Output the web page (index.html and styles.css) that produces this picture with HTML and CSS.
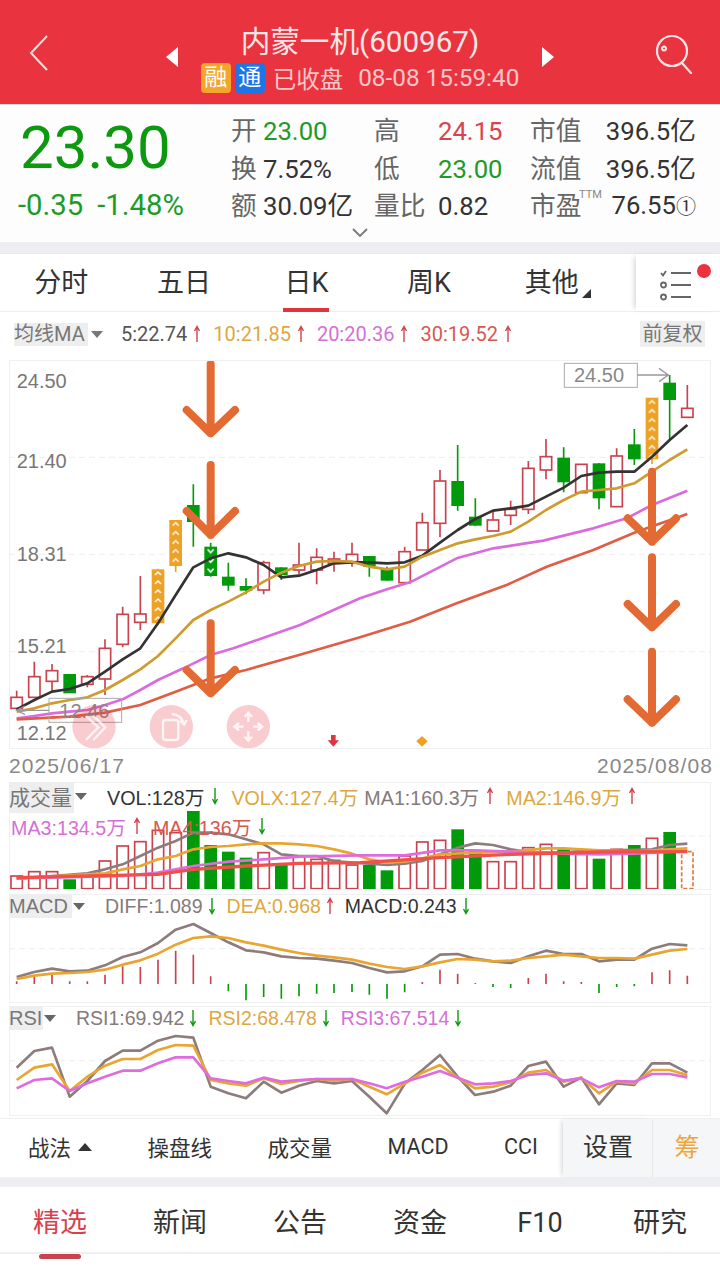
FILE: index.html
```html
<!DOCTYPE html>
<html lang="zh-CN">
<head>
<meta charset="UTF-8">
<title>内蒙一机(600967)</title>
<link rel="stylesheet" href="styles.css">
</head>
<body>
<svg class="defs" width="0" height="0">
  <defs>
    <symbol id="ar-up" viewBox="0 0 8 18"><path d="M4 17V2M1.5 6L4 1.5L6.500 6"/></symbol>
    <symbol id="ar-dn" viewBox="0 0 8 18"><path d="M4 1V16M1.500 12L4 16.500L6.500 12"/></symbol>
    <pattern id="chev-up" patternUnits="userSpaceOnUse" x="455" y="660" width="38" height="27">
      <path d="M10 15L19 6L28 15" fill="none" stroke="#fff" stroke-width="4"/>
    </pattern>
    <pattern id="chev-up2" href="#chev-up" x="508" y="512"></pattern>
    <pattern id="chev-up3" href="#chev-up" x="1937" y="146"></pattern>
    <pattern id="chev-dn" patternUnits="userSpaceOnUse" x="613" y="590" width="38" height="29">
      <path d="M10 8L19 18L28 8" fill="none" stroke="#fff" stroke-width="5"/>
    </pattern>
  </defs>
</svg>

<div class="head">
  <svg class="back" width="20" height="36" viewBox="0 0 20 36"><path d="M18 1L2 18L18 35"/></svg>
  <span class="tri tri-l"></span>
  <div class="head-mid">
    <div class="title">内蒙一机(600967)</div>
    <div class="sub">
      <span class="badge badge-o">融</span><span class="badge badge-b">通</span>
      <span class="state">已收盘</span>
      <span class="time">08-08 15:59:40</span>
    </div>
  </div>
  <span class="tri tri-r"></span>
  <svg class="search" width="38" height="40" viewBox="0 0 38 40">
    <circle cx="17" cy="17" r="15"/><path d="M9 12.500a2 2 0 1 0 .1 0M27 29L36 39"/>
  </svg>
</div>

<div class="info">
  <div class="price">
    <div class="now">23.30</div>
    <div class="chg"><span>-0.35</span><span>-1.48%</span></div>
  </div>
  <div class="stats">
    <div class="st st1"><b>开</b><i class="green">23.00</i></div>
    <div class="st st2"><b>高</b><i class="red">24.15</i></div>
    <div class="st st3"><b>市值</b><i>396.5亿</i></div>
    <div class="st st1"><b>换</b><i>7.52%</i></div>
    <div class="st st2"><b>低</b><i class="green">23.00</i></div>
    <div class="st st3"><b>流值</b><i>396.5亿</i></div>
    <div class="st st1"><b>额</b><i>30.09亿</i></div>
    <div class="st st2"><b>量比</b><i>0.82</i></div>
    <div class="st st3"><b>市盈<sup>TTM</sup></b><i>76.55<small>①</small></i></div>
  </div>
  <svg class="more" width="16" height="9" viewBox="0 0 16 9"><path d="M1 1L8 8L15 1"/></svg>
</div>

<div class="tabs">
  <div class="tab-list">
    <span>分时</span>
    <span>五日</span>
    <span class="on">日K</span>
    <span>周K</span>
    <span class="other">其他</span>
  </div>
  <div class="tab-menu">
    <svg width="36" height="36" viewBox="0 0 36 36">
      <path d="M1 6l2 2.500l3-4.500M11 6H31M11 18H31M11 30H31"/>
      <circle cx="3.500" cy="18" r="2.500"/><circle cx="3.500" cy="30" r="2.500"/>
    </svg>
    <span class="dot"></span>
  </div>
</div>

<div class="ma-row">
  <span class="pick ma-pick">均线MA</span><span class="drop"></span>
  <span class="ma-val c-dark">5:22.74<svg class="ar up"><use href="#ar-up"/></svg></span>
  <span class="ma-val c-gold">10:21.85<svg class="ar up"><use href="#ar-up"/></svg></span>
  <span class="ma-val c-pink">20:20.36<svg class="ar up"><use href="#ar-up"/></svg></span>
  <span class="ma-val c-red">30:19.52<svg class="ar up"><use href="#ar-up"/></svg></span>
  <span class="pick fq">前复权</span>
</div>

<!-- 主图，坐标按 3 倍写 -->
<div class="panel">
  <svg class="chart" width="702" height="389" viewBox="27 30 2106 1167">
    <path class="grid" d="M27 322H2133M27 613H2133M27 905H2133"/>
    <g class="axis">
      <text x="50" y="113">24.50</text>
      <text x="50" y="354">21.40</text>
      <text x="50" y="633">18.31</text>
      <text x="50" y="910">15.21</text>
      <text x="50" y="1170">12.12</text>
    </g>

    <path class="wick-r" d="M50 1022V1080M103 935V1042M156 942V1025M262 975V1012M315 868V1035M368 770V892M421 678V840M791 632V733M897 578V672M950 595V703M1002 605V665M1056 578V650M1214 590V698M1267 488V600M1320 360V562M1479 485V543M1532 452V525M1585 333V492M1638 267V388M1744 343V428M1850 295V470M2062 105V202"/>
    <g class="body-r">
      <rect x="33" y="1042" width="34" height="33"/>
      <rect x="86" y="980" width="34" height="62"/>
      <rect x="139" y="962" width="34" height="32"/>
      <rect x="245" y="980" width="34" height="23"/>
      <rect x="298" y="895" width="34" height="92"/>
      <rect x="351" y="793" width="34" height="90"/>
      <rect x="404" y="792" width="34" height="25"/>
      <rect x="774" y="638" width="34" height="82"/>
      <rect x="880" y="645" width="34" height="15"/>
      <rect x="933" y="622" width="34" height="38"/>
      <rect x="985" y="627" width="34" height="13"/>
      <rect x="1039" y="613" width="34" height="22"/>
      <rect x="1197" y="605" width="34" height="93"/>
      <rect x="1250" y="518" width="34" height="82"/>
      <rect x="1303" y="393" width="34" height="127"/>
      <rect x="1462" y="510" width="34" height="33"/>
      <rect x="1515" y="478" width="34" height="18"/>
      <rect x="1568" y="355" width="34" height="123"/>
      <rect x="1621" y="320" width="34" height="40"/>
      <rect x="1727" y="343" width="34" height="85"/>
      <rect x="1833" y="318" width="34" height="152"/>
      <rect x="2045" y="175" width="34" height="27"/>
    </g>
    <path class="wick-g" d="M580 403V590M632 578V680M685 638V722M738 685V733M844 652V690M1108 618V680M1161 650V692M1373 285V482M1426 445V527M1691 292V427M1797 340V478M1903 237V345M2009 75V270"/>
    <g class="body-g">
      <rect x="190" y="972" width="38" height="58"/>
      <rect x="561" y="465" width="38" height="51"/>
      <rect x="613" y="590" width="38" height="88"/>
      <rect x="666" y="680" width="38" height="27"/>
      <rect x="719" y="708" width="38" height="14"/>
      <rect x="825" y="652" width="38" height="23"/>
      <rect x="1089" y="618" width="38" height="32"/>
      <rect x="1142" y="655" width="38" height="37"/>
      <rect x="1354" y="393" width="38" height="75"/>
      <rect x="1407" y="500" width="38" height="27"/>
      <rect x="1672" y="323" width="38" height="74"/>
      <rect x="1778" y="340" width="38" height="105"/>
      <rect x="1884" y="283" width="38" height="45"/>
      <rect x="1990" y="98" width="38" height="52"/>
    </g>
    <rect fill="url(#chev-dn)" x="613" y="590" width="38" height="88"/>
    <path class="wick-o" d="M474 656V825M527 640V666M1956 320V342"/>
    <g class="body-o">
      <rect x="455" y="658" width="38" height="162"/>
      <rect x="508" y="510" width="38" height="138"/>
      <rect x="1937" y="143" width="38" height="185"/>
    </g>
    <rect fill="url(#chev-up)" x="455" y="658" width="38" height="162"/>
    <rect fill="url(#chev-up2)" x="508" y="510" width="38" height="138"/>
    <rect fill="url(#chev-up3)" x="1937" y="143" width="38" height="185"/>

    <g class="lines">
      <polyline class="l-black" points="50,1078 103,1050 156,1025 209,1017 262,1000 315,965 368,928 421,895 474,820 527,735 580,652 632,625 685,610 738,622 791,645 844,682 897,677 950,660 1002,640 1056,637 1108,637 1161,640 1214,637 1267,617 1320,578 1373,540 1426,507 1479,482 1532,475 1585,467 1638,440 1691,413 1744,378 1797,368 1850,365 1903,365 1956,320 2009,270 2062,225"/>
      <polyline class="l-gold" points="50,1085 103,1075 156,1060 209,1050 262,1042 315,1020 368,990 421,958 474,918 527,865 580,810 632,780 685,755 738,727 791,695 844,668 897,648 950,635 1002,633 1056,635 1108,650 1161,658 1214,650 1267,620 1320,600 1373,580 1426,568 1479,558 1532,545 1585,515 1638,480 1691,450 1744,425 1797,420 1850,415 1903,400 1956,365 2009,330 2062,298"/>
      <polyline class="l-pink" points="50,1105 103,1098 156,1090 209,1085 262,1080 315,1065 368,1048 421,1020 474,990 550,955 632,915 700,895 900,825 1080,745 1161,718 1230,697 1370,625 1480,595 1630,572 1780,535 1880,505 1956,465 2062,422"/>
      <polyline class="l-red" points="50,1108 209,1100 315,1088 421,1065 527,1025 632,985 738,960 897,915 1080,862 1230,815 1370,760 1520,705 1640,650 1780,600 1910,545 2062,492"/>
    </g>

    <g class="tag">
      <rect x="147" y="1045" width="218" height="72"/>
      <path d="M147 1081H50M75 1068L50 1081L75 1094"/>
      <text x="178" y="1103">12.46</text>
      <rect x="1693" y="40" width="219" height="72"/>
      <path d="M1912 75H2005M1977 55L2005 75L1977 95"/>
      <text x="1722" y="97">24.50</text>
    </g>

    <g class="orange-arrows">
      <path d="M632 42V250M560 180L632 250L705 180"/>
      <path d="M632 345V555M560 483L632 555L705 483"/>
      <path d="M632 820V1030M560 960L632 1030L705 960"/>
      <path d="M1956 365V575M1883 505L1956 575L2028 505"/>
      <path d="M1956 622V832M1883 762L1956 832L2028 762"/>
      <path d="M1956 905V1118M1883 1048L1956 1118L2028 1048"/>
    </g>

    <g class="float-btn">
      <circle cx="282" cy="1130" r="65"/>
      <circle cx="514" cy="1130" r="65"/>
      <circle cx="745" cy="1130" r="65"/>
      <path d="M258 1098L295 1132L258 1170M280 1098L316 1132L280 1170"/>
      <rect x="489" y="1110" width="46" height="60" rx="8"/>
      <path d="M515 1092Q544 1094 552 1122M540 1112L552 1124L560 1110"/>
      <path d="M745 1090V1116M734 1100L745 1088L756 1100M745 1144V1170M734 1160L745 1172L756 1160M705 1130H731M717 1119L703 1130L717 1141M759 1130H785M773 1119L787 1130L773 1141"/>
    </g>

    <path class="mark-r" d="M993 1155H1007V1171H1017L1000 1190L983 1171H993Z"/>
    <path class="mark-o" d="M1266 1158L1283 1174L1266 1190L1249 1174Z"/>
  </svg>
</div>

<div class="dates"><span>2025/06/17</span><span>2025/08/08</span></div>

<div class="panel vol">
  <div class="legend">
    <div class="leg-line">
      <span class="pick vol-pick">成交量</span><span class="drop"></span>
      <span class="leg lg-first c-black">VOL:128万<svg class="ar dn"><use href="#ar-dn"/></svg></span>
      <span class="leg lg-tight c-gold">VOLX:127.4万</span>
      <span class="leg c-gray">MA1:160.3万<svg class="ar up"><use href="#ar-up"/></svg></span>
      <span class="leg c-gold">MA2:146.9万<svg class="ar up"><use href="#ar-up"/></svg></span>
    </div>
    <div class="leg-line line2">
      <span class="leg c-pink">MA3:134.5万<svg class="ar up"><use href="#ar-up"/></svg></span>
      <span class="leg c-red">MA4:136万<svg class="ar dn"><use href="#ar-dn"/></svg></span>
    </div>
  </div>
  <svg class="chart" width="702" height="108" viewBox="27 23 2106 324">
    <path class="grid" d="M27 185H2133"/>
    <g class="body-r">
      <rect x="33" y="305" width="34" height="38"/>
      <rect x="86" y="292" width="34" height="51"/>
      <rect x="139" y="292" width="34" height="51"/>
      <rect x="245" y="305" width="34" height="38"/>
      <rect x="298" y="260" width="34" height="83"/>
      <rect x="351" y="215" width="34" height="128"/>
      <rect x="404" y="202" width="34" height="141"/>
      <rect x="457" y="168" width="34" height="175"/>
      <rect x="510" y="175" width="34" height="168"/>
      <rect x="774" y="235" width="34" height="108"/>
      <rect x="880" y="245" width="34" height="98"/>
      <rect x="933" y="255" width="34" height="88"/>
      <rect x="985" y="258" width="34" height="85"/>
      <rect x="1039" y="272" width="34" height="71"/>
      <rect x="1197" y="245" width="34" height="98"/>
      <rect x="1250" y="203" width="34" height="140"/>
      <rect x="1303" y="198" width="34" height="145"/>
      <rect x="1462" y="262" width="34" height="81"/>
      <rect x="1515" y="262" width="34" height="81"/>
      <rect x="1568" y="220" width="34" height="123"/>
      <rect x="1621" y="210" width="34" height="133"/>
      <rect x="1727" y="240" width="34" height="103"/>
      <rect x="1833" y="225" width="34" height="118"/>
      <rect x="1939" y="192" width="34" height="151"/>
    </g>
    <g class="body-g">
      <rect x="190" y="315" width="38" height="30"/>
      <rect x="561" y="110" width="38" height="235"/>
      <rect x="613" y="212" width="38" height="133"/>
      <rect x="666" y="232" width="38" height="113"/>
      <rect x="719" y="250" width="38" height="95"/>
      <rect x="825" y="272" width="38" height="73"/>
      <rect x="1089" y="272" width="38" height="73"/>
      <rect x="1142" y="288" width="38" height="57"/>
      <rect x="1354" y="165" width="38" height="180"/>
      <rect x="1407" y="230" width="38" height="115"/>
      <rect x="1672" y="225" width="38" height="120"/>
      <rect x="1778" y="253" width="38" height="92"/>
      <rect x="1884" y="212" width="38" height="133"/>
      <rect x="1990" y="173" width="38" height="172"/>
    </g>
    <rect class="body-d" x="2045" y="232" width="34" height="111"/>
    <g class="lines">
      <polyline class="l-gray" points="50,312 156,305 262,297 315,285 368,270 421,245 474,220 527,200 580,175 632,175 685,180 738,195 791,210 844,240 897,245 950,245 1002,260 1056,265 1108,268 1161,272 1214,268 1267,260 1320,240 1373,220 1426,207 1479,212 1532,225 1585,233 1638,235 1691,235 1744,230 1956,225 2009,212 2062,208"/>
      <polyline class="l-gold2" points="50,312 262,300 315,297 368,285 421,275 474,255 527,245 580,225 632,218 685,215 738,210 791,207 844,207 897,210 950,215 1002,225 1056,238 1108,255 1161,265 1214,262 1267,252 1320,240 1426,235 1532,232 1638,222 1691,222 1797,228 1903,232 2009,225 2062,222"/>
      <polyline class="l-pink2" points="50,312 368,305 474,295 580,275 685,262 791,255 897,247 1080,243 1214,243 1320,228 1426,228 1532,232 1691,238 1797,240 1903,238 2062,230"/>
      <polyline class="l-red2" points="50,310 474,300 580,285 738,275 897,267 1080,265 1320,250 1532,240 1797,233 2062,232"/>
    </g>
  </svg>
</div>

<div class="panel sub-panel">
  <div class="legend">
    <div class="leg-line">
      <span class="pick macd-pick">MACD</span><span class="drop"></span>
      <span class="leg lg-first c-gray">DIFF:1.089<svg class="ar dn"><use href="#ar-dn"/></svg></span>
      <span class="leg c-gold">DEA:0.968<svg class="ar up"><use href="#ar-up"/></svg></span>
      <span class="leg c-black">MACD:0.243<svg class="ar dn"><use href="#ar-dn"/></svg></span>
    </div>
  </div>
  <svg class="chart" width="702" height="109" viewBox="27 358 2106 327">
    <path class="grid" d="M27 522H2133"/>
    <path class="wick-r" d="M50 628V620M103 628V605M156 628V598M209 628V620M262 628V620M315 628V600M368 628V575M421 628V577M474 628V555M527 628V528M580 628V540M632 628V605M1267 628V622M1320 628V585M1373 628V597M1426 628V625M1585 628V610M1638 628V597M1691 628V620M1744 628V622M1956 628V593M2009 628V587M2062 628V603"/>
    <path class="wick-g" d="M685 628V650M738 628V677M791 628V667M844 628V672M897 628V665M950 628V657M1002 628V655M1056 628V652M1108 628V660M1161 628V672M1214 628V653M1479 628V637M1532 628V640M1797 628V655M1850 628V637M1903 628V635"/>
    <g class="lines">
      <polyline class="l-gray" points="50,607 103,592 156,582 209,590 262,588 315,572 368,547 421,533 474,505 527,465 580,448 632,475 685,503 738,527 791,533 844,545 897,550 950,552 1002,558 1056,565 1108,580 1161,593 1214,590 1267,575 1320,540 1373,538 1426,552 1479,560 1532,565 1585,545 1638,528 1691,538 1744,538 1797,560 1850,555 1903,555 1956,522 2009,508 2062,512"/>
      <polyline class="l-gold2" points="50,613 103,603 156,597 209,595 262,592 315,585 368,570 421,557 474,537 527,510 580,490 632,485 685,490 738,503 791,513 844,525 897,535 950,543 1002,548 1056,555 1108,567 1161,577 1214,583 1267,575 1320,563 1373,553 1426,555 1479,560 1532,558 1585,550 1638,545 1691,540 1744,545 1797,550 1850,550 1903,552 1956,540 2009,528 2062,523"/>
    </g>
  </svg>
</div>

<div class="panel sub-panel rsi">
  <div class="legend">
    <div class="leg-line">
      <span class="pick rsi-pick">RSI</span><span class="drop"></span>
      <span class="leg lg-first c-gray">RSI1:69.942<svg class="ar dn"><use href="#ar-dn"/></svg></span>
      <span class="leg c-gold">RSI2:68.478<svg class="ar dn"><use href="#ar-dn"/></svg></span>
      <span class="leg c-pink">RSI3:67.514<svg class="ar dn"><use href="#ar-dn"/></svg></span>
    </div>
  </div>
  <svg class="chart" width="702" height="110" viewBox="27 693 2106 330">
    <path class="grid" d="M27 857H2133"/>
    <g class="lines">
      <polyline class="l-gray" points="50,878 103,828 156,818 209,965 262,918 315,858 368,827 421,827 474,797 527,783 580,788 632,935 685,955 738,970 791,920 844,953 897,932 950,918 1002,925 1056,918 1108,965 1160,1015 1215,925 1267,885 1320,840 1373,905 1425,960 1480,950 1532,932 1585,873 1638,860 1691,935 1744,908 1797,988 1850,925 1903,930 1956,865 2009,865 2062,893"/>
      <polyline class="l-gold2" points="50,915 103,878 156,868 209,948 262,905 315,872 368,852 421,852 474,825 527,810 580,812 632,915 685,925 738,932 791,910 844,927 897,918 950,912 1002,917 1056,912 1108,935 1160,958 1215,925 1267,893 1320,870 1373,908 1425,940 1480,935 1532,922 1585,893 1638,885 1691,920 1744,908 1797,955 1850,920 1903,925 1956,885 2009,885 2062,900"/>
      <polyline class="l-pink2" points="50,940 103,915 156,910 209,948 262,925 315,905 368,887 421,887 474,865 527,847 580,847 632,910 685,918 738,925 791,908 844,920 897,915 950,912 1002,912 1056,912 1108,925 1160,940 1215,920 1267,905 1320,888 1373,908 1425,928 1480,925 1532,918 1585,900 1638,895 1691,917 1744,910 1797,937 1850,918 1903,920 1956,897 2009,897 2062,907"/>
    </g>
  </svg>
</div>

<div class="tools">
  <div class="tool-list">
    <span>战法<em class="up-tri"></em></span>
    <span>操盘线</span>
    <span>成交量</span>
    <span>MACD</span>
    <span>CCI</span>
  </div>
  <div class="tool-side">设置</div>
  <div class="tool-side chou">筹</div>
</div>

<div class="news">
  <span class="on">精选</span>
  <span>新闻</span>
  <span>公告</span>
  <span>资金</span>
  <span>F10</span>
  <span>研究</span>
</div>
</body>
</html>
```

FILE: styles.css
```css
html,body{
  margin: 0;
  padding: 0;
  background: #fff;
}
body{
  width: 720px;
  height: 1281px;
  overflow: hidden;
  font-family: Roboto, "Noto Sans CJK SC", sans-serif;
  color: #333;
}
.defs{position: absolute;}

/* 顶栏 */
.head{
  height: 104px;
  background: #e9343f;
  display: grid;
  grid-template-columns: 166px 12px 364px 12px 166px;
  align-items: center;
  border-bottom: 1px solid #d9d9d9;
  box-sizing: content-box;
}
.back{margin: 2px 0 0 29px; fill: none; stroke: #fbdfe0; stroke-width: 2;}
.tri{
  width: 0;
  height: 0;
  margin-top: 10px;
  border-top: 10px solid transparent;
  border-bottom: 10px solid transparent;
}
.tri-l{border-right: 12px solid #fff;}
.tri-r{border-left: 12px solid #fff;}
.head-mid{padding-top: 13px; text-align: center;}
.title{
  height: 38px;
  line-height: 38px;
  font-size: 29.600px;
  color: #fbe6e7;
}
.sub{
  height: 34px;
  display: flex;
  align-items: center;
  justify-content: center;
  color: #f8c6ca;
  white-space: nowrap;
}
.badge{
  width: 30px;
  height: 30px;
  line-height: 29px;
  margin-right: 4px;
  border-radius: 4px;
  color: #fff;
  font-size: 23px;
  text-align: center;
}
.badge-o{background: #f5a52a;}
.badge-b{background: #1f74e6;}
.state{margin: 0 15px 0 4px; font-size: 23.5px;}
.time{font-size: 24.3px;}
.search{justify-self: end; margin: 4px 27px 0 0; fill: none; stroke: #fbe6e7; stroke-width: 2.2; stroke-linecap: round;}

/* 行情 */
.info{
  position: relative;
  height: 137px;
  display: flex;
  background: #fdfdfd;
}
.price{width: 231px; flex: none;}
.now{
  margin: 13px 0 0 20px;
  height: 60px;
  line-height: 60px;
  font-size: 60px;
  color: #0d990f;
}
.chg{
  margin: 12px 0 0 18px;
  display: flex;
  gap: 14px;
  font-size: 29.300px;
  line-height: 30px;
  color: #1d9b26;
}
.stats{
  margin-top: 8px;
  display: grid;
  grid-template-columns: 143px 156px 166px;
  grid-auto-rows: 37.5px;
  align-items: center;
  font-size: 25.700px;
}
.st{display: flex; align-items: center; line-height: 37px;}
.st b{font-weight: 400; color: #666; white-space: nowrap;}
.st i{font-style: normal; color: #333; white-space: nowrap;}
.st small{font-size: 20px;}
.st1 b{width: 32px;}
.st2 b{width: 64px;}
.st3{justify-content: space-between;}
.st3 b{position: relative;}
.st sup{position: absolute; top: 0; left: 49px; font-size: 11px; line-height: 14px; color: #888;}
.green{color: #1d9b26 !important;}
.red{color: #d8434d !important;}
.more{position: absolute; left: 352px; bottom: 5px; fill: none; stroke: #777; stroke-width: 1.8;}

/* 分时切换 */
.tabs{
  margin-top: 11px;
  height: 59px;
  display: flex;
  border-bottom: 1px solid #eee;
  border-top: 1px solid #e9e9ec;
  box-sizing: border-box;
  position: relative;
}
.tabs::before{
  content: "";
  position: absolute;
  left: 0;
  right: 0;
  top: -12px;
  height: 11px;
  background: #eeeef2;
}
.tab-list{width: 636px; display: flex; padding: 0 23px 0 0; box-sizing: border-box;}
.tab-list span{
  flex: 1;
  text-align: center;
  font-size: 27px;
  line-height: 59px;
  position: relative;
  color: #333;
}
.tab-list .on::after{
  content: "";
  position: absolute;
  left: 38px;
  width: 46px;
  bottom: -1px;
  height: 4px;
  background: #e0343f;
}
.tab-list .other::after{
  content: "";
  position: absolute;
  left: 92px;
  bottom: 13px;
  border-left: 9px solid transparent;
  border-bottom: 9px solid #333;
}
.tab-menu{
  width: 84px;
  position: relative;
  display: flex;
  align-items: center;
  justify-content: center;
  box-shadow: -4px 0 6px -3px rgba(0,0,0,0.2);
}
.tab-menu svg{margin-top: 4px; fill: none; stroke: #666; stroke-width: 1.8;}
.dot{
  position: absolute;
  top: 10px;
  right: 9px;
  width: 14px;
  height: 14px;
  border-radius: 50%;
  background: #e9343f;
}

/* 均线 */
.ma-row{
  height: 44px;
  display: flex;
  align-items: center;
  padding-left: 14px;
  font-size: 20px;
  position: relative;
}
.pick{background: #eee; color: #777; white-space: nowrap;}
.ma-pick{width: 74px; height: 23px; line-height: 23px; font-size: 20px;}
.drop{
  margin-left: 3px;
  border-left: 6px solid transparent;
  border-right: 6px solid transparent;
  border-top: 7px solid #777;
}
.ma-val{display: flex; align-items: center; margin-right: 12px;}
.ma-row .drop + .ma-val{margin-left: 18px;}
.fq{position: absolute; left: 640px; width: 65px; text-align: center; height: 26px; line-height: 26px;}
.ar{
  width: 8px;
  height: 18px;
  margin-left: 6px;
  fill: none;
  stroke-width: 1.4;
  flex: none;
}
.ar.up{stroke: #d0434c;}
.ar.dn{stroke: #0d990f;}

.c-black{color: #333;}
.c-dark{color: #555;}
.c-gold{color: #dca83f;}
.c-pink{color: #d56fd8;}
.c-red{color: #d8584f;}
.c-gray{color: #857a7a;}

/* 面板 */
.panel{
  position: relative;
  margin: 4px 9px 0;
  outline: 1px solid #f0f0f0;
  outline-offset: -1px;
}
.chart{display: block;}
.dates{
  height: 33px;
  padding: 0 7px 0 9px;
  display: flex;
  justify-content: space-between;
  align-items: center;
  font-family: "Liberation Sans", sans-serif;
  font-size: 21px;
  letter-spacing: 1.1px;
  color: #888;
  margin-bottom: -4px;
}
.grid{stroke: #eee; stroke-width: 3; stroke-dasharray: 18 12; fill: none;}
.axis text{font: 60px "Liberation Sans", sans-serif; fill: #777;}
.wick-r,.wick-g,.wick-o{fill: none; stroke-width: 5;}
.wick-r{stroke: #c9434e;}
.wick-g{stroke: #0d990f;}
.wick-o{stroke: #eda125;}
.body-r rect{fill: #fff; stroke: #c9434e; stroke-width: 5;}
.body-g rect{fill: #009a0a;}
.body-o rect{fill: #eda125;}
.body-d{fill: #fff; stroke: #dd7c3a; stroke-width: 5; stroke-dasharray: 12 6;}
.lines polyline{fill: none; stroke-linejoin: round; stroke-width: 8;}
.l-black{stroke: #333;}
.l-gold{stroke: #cf9a2e;}
.l-pink{stroke: #d96bdc;}
.l-red{stroke: #e05c44;}
.l-gray{stroke: #8d7c7c;}
.l-gold2{stroke: #e8a532;}
.l-pink2{stroke: #df6cdf;}
.lines .l-red2{stroke: #f1504a; stroke-width: 10;}
.tag rect{fill: none; stroke: #aaa; stroke-width: 3;}
.tag path{fill: none; stroke: #999; stroke-width: 4;}
.tag text{font: 60px "Liberation Sans", sans-serif; fill: #888;}
.orange-arrows path{fill: none; stroke: #e36a33; stroke-width: 24; stroke-linecap: round; stroke-linejoin: round;}
.float-btn circle{fill: rgba(233,52,63,0.25);}
.float-btn path,.float-btn rect{fill: none; stroke: rgba(255,255,255,0.8); stroke-width: 7;}
.mark-r{fill: #e0343f;}
.mark-o{fill: #eda125;}

/* 副图图例 */
.legend{
  position: absolute;
  left: 0;
  top: 0;
  right: 0;
  z-index: 2;
  font-family: "Liberation Sans", "Noto Sans CJK SC", sans-serif;
  font-size: 19.700px;
}
.leg-line{display: flex; align-items: center; height: 28px;}
.leg-line .drop{margin-left: 1px; margin-right: 0; border-top-color: #666;}
.line2{margin-top: 2px; padding-left: 2px;}
.leg{display: flex; align-items: center; margin-right: 12px; white-space: nowrap;}
.leg .ar{margin-left: 7px;}
.lg-tight{margin-right: 6px;}
.vol-pick{width: 65px; height: 31px; line-height: 31px; font-size: 21px; align-self: flex-start;}
.macd-pick{width: 63px; height: 24px; line-height: 24px; font-size: 20px;}
.rsi-pick{width: 34px; height: 24px; line-height: 24px; font-size: 20px;}
.lg-first{margin-left: 20px;}
.sub-panel .legend{font-size: 19.500px;}
.sub-panel .leg-line{height: 24px;}
.sub-panel .leg{margin-right: 11px;}
.sub-panel .leg .ar{margin-left: 5px;}
.rsi{margin-top: 3px;}

/* 底部工具条 */
.tools{
  margin-top: 2px;
  height: 59px;
  display: flex;
  border-top: 1px solid #f0f0f0;
  box-sizing: border-box;
}
.tool-list{
  width: 563px;
  padding: 0 0 3px 28px;
  box-sizing: border-box;
  display: flex;
  align-items: center;
  gap: 55.5px;
  font-size: 21.500px;
  color: #333;
}
.tool-list span{display: flex; align-items: center; white-space: nowrap;}
.up-tri{
  margin-left: 7px;
  border-left: 7px solid transparent;
  border-right: 7px solid transparent;
  border-bottom: 8px solid #333;
}
.tool-side{
  width: 89px;
  padding-left: 1px;
  box-sizing: border-box;
  background: #f5f6f8;
  text-align: center;
  line-height: 58px;
  font-size: 25px;
  color: #333;
  box-shadow: -3px 0 5px -2px rgba(0,0,0,0.18);
}
.chou{
  width: 68px;
  color: #eea63a;
  box-shadow: none;
  border-left: 1px solid #e8e8e8;
}
.news{
  position: relative;
  margin-top: 10px;
  height: 67px;
  display: grid;
  grid-template-columns: repeat(6, 120px);
  border-bottom: 2px solid #f0f0f0;
  box-sizing: border-box;
}
.news::before{
  content: "";
  position: absolute;
  left: 0;
  right: 0;
  top: -10px;
  height: 10px;
  background: #eeeef2;
}
.news span{
  position: relative;
  text-align: center;
  font-size: 27px;
  line-height: 72px;
  color: #333;
}
.news .on{color: #d9404a;}
.news .on::after{
  content: "";
  position: absolute;
  left: 39px;
  width: 42px;
  bottom: 0;
  height: 5px;
  border-radius: 3px;
  background: #c8434e;
}
```
